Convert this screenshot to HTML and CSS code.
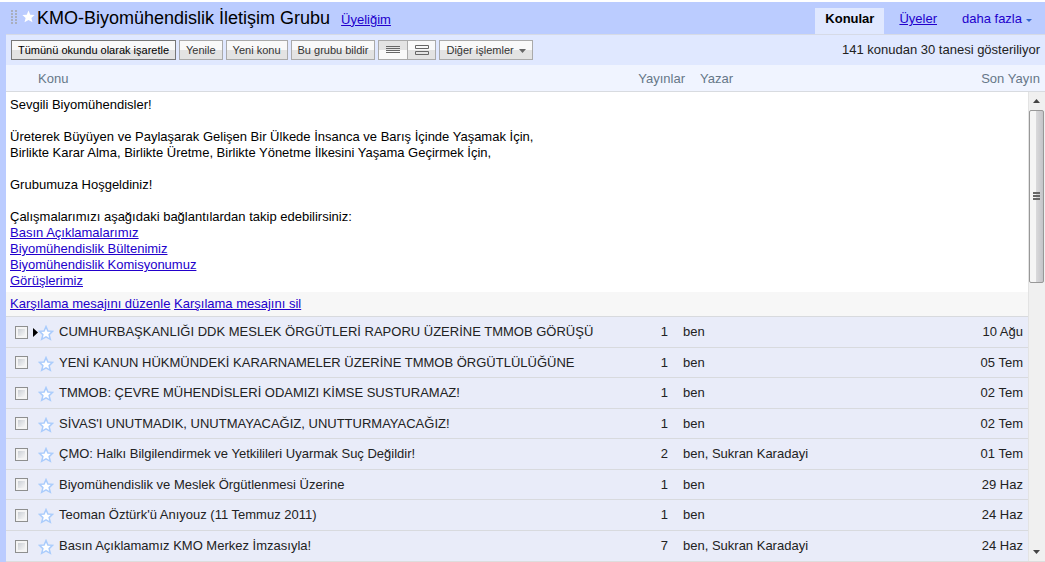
FILE: index.html
```html
<!DOCTYPE html>
<html lang="tr">
<head>
<meta charset="utf-8">
<title>KMO-Biyomühendislik İletişim Grubu</title>
<link rel="stylesheet" href="styles.css">
</head>
<body>
<svg class="defs" aria-hidden="true">
  <symbol id="star" viewBox="0 0 16 16"><path d="M8 1.600 L9.900 6 L14.600 6.300 L11.100 9.600 L12.300 14.300 L8 11.800 L3.700 14.300 L4.900 9.600 L1.400 6.300 L6.100 6 Z"/></symbol>
</svg>
<main class="group">
  <header class="titlebar">
    <svg class="grip" viewBox="0 0 6 14" aria-hidden="true"><path d="M1 0v14M5 0v14"/></svg>
    <svg class="title-star" viewBox="1 1 14 14" aria-hidden="true"><use href="#star" width="16" height="16"/></svg>
    <h1 class="title">KMO-Biyomühendislik İletişim Grubu</h1>
    <a class="membership" href="#">Üyeliğim</a>
    <nav class="tabs">
      <a class="tab tab-active" href="#">Konular</a>
      <a class="tab" href="#">Üyeler</a>
      <a class="tab tab-more" href="#">daha fazla<svg class="more-arrow" viewBox="0 0 6 3" aria-hidden="true"><path d="M0 0h6L3 3z"/></svg></a>
    </nav>
  </header>

  <div class="toolbar">
    <button class="btn btn-primary" type="button">Tümünü okundu olarak işaretle</button>
    <button class="btn" type="button">Yenile</button>
    <button class="btn" type="button">Yeni konu</button>
    <button class="btn" type="button">Bu grubu bildir</button>
    <div class="toggle">
      <button class="btn toggle-btn toggle-on" type="button" aria-label="Liste görünümü"><svg class="view-icon" viewBox="0 0 14 10" aria-hidden="true"><path class="line" d="M0 1.5h14M0 3.5h14M0 5.5h14M0 7.5h14"/></svg></button>
      <button class="btn toggle-btn" type="button" aria-label="Özet görünümü"><svg class="view-icon" viewBox="0 0 14 10" aria-hidden="true"><path class="line" d="M.5 .5h13v3H.5zM.5 6.5h13v3H.5z"/></svg></button>
    </div>
    <button class="btn btn-menu" type="button">Diğer işlemler<svg class="menu-arrow" viewBox="0 0 7 4" aria-hidden="true"><path d="M0 0h7L3.500 4z"/></svg></button>
    <span class="count">141 konudan 30 tanesi gösteriliyor</span>
  </div>

  <div class="columns">
    <span class="col-topic">Konu</span>
    <span class="col-posts">Yayınlar</span>
    <span class="col-author">Yazar</span>
    <span class="col-date">Son Yayın</span>
  </div>

  <div class="body">
    <div class="content">
      <section class="welcome">
        <p>Sevgili Biyomühendisler!</p>
        <p>Üreterek Büyüyen ve Paylaşarak Gelişen Bir Ülkede İnsanca ve Barış İçinde Yaşamak İçin,<br>Birlikte Karar Alma, Birlikte Üretme, Birlikte Yönetme İlkesini Yaşama Geçirmek İçin,</p>
        <p>Grubumuza Hoşgeldiniz!</p>
        <p>Çalışmalarımızı aşağıdaki bağlantılardan takip edebilirsiniz:<br><a href="#">Basın Açıklamalarımız</a><br><a href="#">Biyomühendislik Bültenimiz</a><br><a href="#">Biyomühendislik Komisyonumuz</a><br><a href="#">Görüşlerimiz</a></p>
      </section>
      <div class="welcome-actions"><a href="#">Karşılama mesajını düzenle</a> <a href="#">Karşılama mesajını sil</a></div>
      <table class="topics">
        <colgroup><col class="w-check"><col class="w-star"><col><col class="w-posts"><col class="w-author"><col class="w-date"></colgroup>
        <tbody>
          <tr class="current"><td class="check"><input type="checkbox" aria-label="Konuyu seç"><svg class="pointer" viewBox="0 0 5 9" aria-hidden="true"><path d="M0 0l5 4.500l-5 4.500z"/></svg></td><td><svg class="star"><use href="#star"/></svg></td><td class="topic">CUMHURBAŞKANLIĞI DDK MESLEK ÖRGÜTLERİ RAPORU ÜZERİNE TMMOB GÖRÜŞÜ</td><td class="posts">1</td><td class="author">ben</td><td class="date">10 Ağu</td></tr>
          <tr><td class="check"><input type="checkbox" aria-label="Konuyu seç"></td><td><svg class="star"><use href="#star"/></svg></td><td class="topic">YENİ KANUN HÜKMÜNDEKİ KARARNAMELER ÜZERİNE TMMOB ÖRGÜTLÜLÜĞÜNE</td><td class="posts">1</td><td class="author">ben</td><td class="date">05 Tem</td></tr>
          <tr><td class="check"><input type="checkbox" aria-label="Konuyu seç"></td><td><svg class="star"><use href="#star"/></svg></td><td class="topic">TMMOB: ÇEVRE MÜHENDİSLERİ ODAMIZI KİMSE SUSTURAMAZ!</td><td class="posts">1</td><td class="author">ben</td><td class="date">02 Tem</td></tr>
          <tr><td class="check"><input type="checkbox" aria-label="Konuyu seç"></td><td><svg class="star"><use href="#star"/></svg></td><td class="topic">SİVAS'I UNUTMADIK, UNUTMAYACAĞIZ, UNUTTURMAYACAĞIZ!</td><td class="posts">1</td><td class="author">ben</td><td class="date">02 Tem</td></tr>
          <tr><td class="check"><input type="checkbox" aria-label="Konuyu seç"></td><td><svg class="star"><use href="#star"/></svg></td><td class="topic">ÇMO: Halkı Bilgilendirmek ve Yetkilileri Uyarmak Suç Değildir!</td><td class="posts">2</td><td class="author">ben, Sukran Karadayi</td><td class="date">01 Tem</td></tr>
          <tr><td class="check"><input type="checkbox" aria-label="Konuyu seç"></td><td><svg class="star"><use href="#star"/></svg></td><td class="topic">Biyomühendislik ve Meslek Örgütlenmesi Üzerine</td><td class="posts">1</td><td class="author">ben</td><td class="date">29 Haz</td></tr>
          <tr><td class="check"><input type="checkbox" aria-label="Konuyu seç"></td><td><svg class="star"><use href="#star"/></svg></td><td class="topic">Teoman Öztürk'ü Anıyouz (11 Temmuz 2011)</td><td class="posts">1</td><td class="author">ben</td><td class="date">24 Haz</td></tr>
          <tr><td class="check"><input type="checkbox" aria-label="Konuyu seç"></td><td><svg class="star"><use href="#star"/></svg></td><td class="topic">Basın Açıklamamız KMO Merkez İmzasıyla!</td><td class="posts">7</td><td class="author">ben, Sukran Karadayi</td><td class="date">24 Haz</td></tr>
        </tbody>
      </table>
    </div>
    <div class="scrollbar">
      <button class="scroll-arrow" type="button" aria-label="Yukarı kaydır"><svg viewBox="0 0 7 4" aria-hidden="true"><path d="M0 4h7L3.500 0z"/></svg></button>
      <div class="track"><div class="thumb"><svg viewBox="0 0 7 9" aria-hidden="true"><path d="M0 1h7M0 4h7M0 7h7"/></svg></div></div>
      <button class="scroll-arrow" type="button" aria-label="Aşağı kaydır"><svg viewBox="0 0 7 4" aria-hidden="true"><path d="M0 0h7L3.500 4z"/></svg></button>
    </div>
  </div>
</main>
</body>
</html>
```
FILE: styles.css
```css
* { box-sizing: border-box; }

body {
  margin: 0;
  padding-top: 2px;
  background: #fff;
  color: #000;
  font: 13px/16px "Liberation Sans", Arial, sans-serif;
}

a { color: #20c; }
.defs { position: absolute; width: 0; height: 0; }
svg { display: block; }

.group { border-left: 6px solid #bcf; }

/* Title bar */
.titlebar {
  display: flex;
  align-items: center;
  height: 32px;
  padding-left: 5px;
  background: #bcf;
}
.grip { width: 6px; height: 14px; margin: 0 5px 2px 0; }
.grip path { stroke: #a9aebd; stroke-width: 2; stroke-dasharray: 2 1; fill: none; }
.title-star { width: 13px; height: 13px; margin-bottom: 3px; fill: #fff; }
.title { margin: 0 0 0 2px; font-size: 18px; line-height: 22px; font-weight: 400; white-space: nowrap; }
.membership { margin: 3px 0 0 11px; }
.tabs { display: flex; gap: 5px; align-self: flex-end; margin-left: auto; padding-right: 3px; white-space: nowrap; }
.tab { padding: 3px 10px 7px; }
.tab-active { background: #e0e8ff; color: #000; font-weight: 700; text-decoration: none; }
.tab-more { display: flex; align-items: center; text-decoration: none; }
.more-arrow { width: 6px; height: 3px; margin: 2px 0 0 4px; fill: #36c; }

/* Toolbar */
.toolbar {
  display: flex;
  align-items: center;
  gap: 3px;
  height: 31px;
  padding: 0 5px;
  background: #e0e8ff;
  border-top: 1px solid #d6dae6;
}
.btn {
  display: flex;
  align-items: center;
  height: 20px;
  padding: 0 6px 1px;
  border: 1px solid #aaa;
  background: linear-gradient(#f9f9f9 0 50%, #e3e3e3 50% 100%);
  color: #333;
  font: 11px/16px "Liberation Sans", Arial, sans-serif;
  white-space: nowrap;
}
.btn-primary { border-color: #777; color: #000; }
.toggle { display: flex; }
.toggle-btn { width: 29px; justify-content: center; padding: 0; }
.toggle-on { background: linear-gradient(#e3e3e3 0 50%, #f9f9f9 50% 100%); border-right: 0; }
.view-icon { width: 14px; height: 10px; }
.line { fill: none; stroke: #666; stroke-width: 1; }
.menu-arrow { width: 7px; height: 4px; margin: 2px 0 0 5px; fill: #666; }
.count { margin-left: auto; color: #222; white-space: nowrap; }

/* Column headings */
.columns {
  display: grid;
  grid-template-columns: 1fr 70px 245px 100px;
  align-items: center;
  height: 27px;
  padding-top: 1px;
  background: #f0f4ff;
  border-bottom: 1px solid #d8dbe0;
  color: #678;
}
.col-topic { padding-left: 32px; }
.col-posts { padding-right: 15px; text-align: right; }
.col-date { padding-right: 5px; text-align: right; }

/* Scrolling area */
.body { display: flex; border-bottom: 1px solid #ddd; }
.content { flex: 1; min-width: 0; }
.welcome { padding: 5px 4px 3px; }
.welcome p { margin: 0 0 16px; }
.welcome p:last-child { margin: 0; }
.welcome-actions { padding: 4px; background: #f7f7f7; border-bottom: 1px solid #d8dade; }

.topics { width: 100%; border-collapse: separate; border-spacing: 0; table-layout: fixed; background: #e9ecf9; color: #222; }
.topics td { height: 30px; padding: 0; border-bottom: 1px solid #d8dade; vertical-align: middle; white-space: nowrap; }
.topics tr:nth-child(odd) td { height: 31px; }
.topics tr:last-child td { height: 30px; border-bottom: 0; }
.w-check { width: 32px; }
.w-star { width: 21px; }
.w-posts { width: 60px; }
.w-author { width: 245px; }
.w-date { width: 100px; }
.topics .check { padding-left: 9px; }
.current .check { display: flex; align-items: center; gap: 5px; }
.check input {
  appearance: none;
  display: block;
  flex: none;
  width: 13px;
  height: 13px;
  margin: 0;
  border: 1px solid #8e8f8f;
  background: linear-gradient(135deg, #cbcfd5, #f6f6f6) content-box, #f4f4f4;
  padding: 2px;
}
.pointer { width: 5px; height: 9px; flex: none; }
.star { width: 16px; height: 16px; margin-top: 2px; fill: #fff; stroke: #aaccfc; stroke-width: 1.500; }
.topics .posts { padding-right: 15px; text-align: right; }
.topics .date { padding-right: 5px; text-align: right; }

/* Scroll bar */
.scrollbar { display: flex; flex-direction: column; width: 17px; padding-right: 1px; background: #f0f0f0; border-left: 1px solid #e3e3e3; }
.scroll-arrow { display: flex; align-items: center; justify-content: center; height: 18px; padding: 0; border: 0; background: #f0f0f0; }
.scroll-arrow svg { width: 7px; height: 4px; fill: #444; }
.track { flex: 1; }
.thumb {
  display: flex;
  align-items: center;
  justify-content: center;
  height: 40%;
  min-height: 173px;
  border: 1px solid #989898;
  border-radius: 2px;
  background: linear-gradient(90deg, #f5f5f5 0 45%, #d8d8da 50%, #c4c4c8);
}
.thumb svg { width: 7px; height: 9px; }
.thumb path { stroke: #666; stroke-width: 2; }
```
